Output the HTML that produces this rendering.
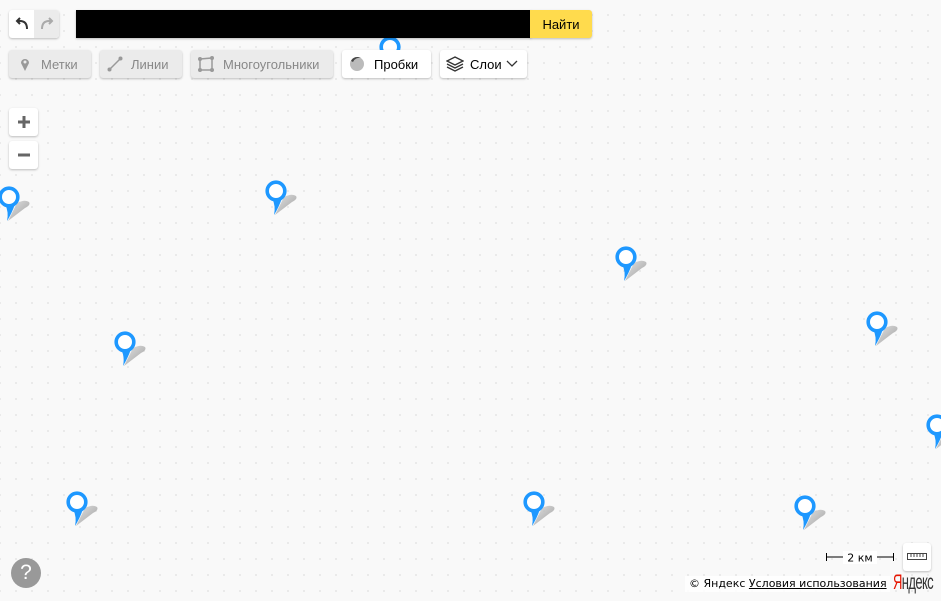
<!DOCTYPE html>
<html><head><meta charset="utf-8"><style>
*{box-sizing:border-box;margin:0;padding:0}
body{width:941px;height:601px;overflow:hidden;position:relative;font-family:"Liberation Sans",sans-serif;background-color:#f9f9f9;background-image:radial-gradient(circle,#e8e8e8 0.9px,transparent 1.2px);background-size:16px 16px;background-position:-8px 7px}
.btn{position:absolute;background:#fff;border-radius:3px;box-shadow:0 1px 2px rgba(0,0,0,.25);font-size:13px;color:#000;display:flex;align-items:center}
.dis{background:#ebebeb;color:#888}
.pin{position:absolute;width:34px;height:40px}
</style></head><body>
<svg width="0" height="0" style="position:absolute"><defs>
<linearGradient id="g" x1="0" y1="0" x2="1" y2="1"><stop offset="0" stop-color="#ddd"/><stop offset="1" stop-color="#888"/></linearGradient>
<symbol id="p" viewBox="0 0 34 40">
<path d="M10 35 L27 22 Q33 19 31 16 Q27 13 19 17 Z" fill="url(#g)" opacity=".8"/>
<path d="M7 18 Q11 26 9 35 Q14 27 17 18 Z" fill="#1e98ff"/>
<circle cx="11" cy="11" r="8.8" fill="#fff" stroke="#1e98ff" stroke-width="3.6"/>
</symbol></defs></svg>

<svg class="pin" style="left:379px;top:36px"><use href="#p"/></svg>
<svg class="pin" style="left:-2px;top:186px"><use href="#p"/></svg>
<svg class="pin" style="left:265px;top:180px"><use href="#p"/></svg>
<svg class="pin" style="left:615px;top:246px"><use href="#p"/></svg>
<svg class="pin" style="left:114px;top:331px"><use href="#p"/></svg>
<svg class="pin" style="left:866px;top:311px"><use href="#p"/></svg>
<svg class="pin" style="left:926px;top:414px"><use href="#p"/></svg>
<svg class="pin" style="left:66px;top:491px"><use href="#p"/></svg>
<svg class="pin" style="left:523px;top:491px"><use href="#p"/></svg>
<svg class="pin" style="left:794px;top:495px"><use href="#p"/></svg>

<div class="btn" style="left:9px;top:10px;width:50px;height:28px;overflow:hidden">
<div style="width:25px;height:28px;display:flex;align-items:center;justify-content:center"><svg width="16" height="14"><path d="M13 12 Q13 4 6 4 L3 4 M6 1 L3 4 L6 7" fill="none" stroke="#333" stroke-width="2"/></svg></div>
<div style="width:25px;height:28px;background:#ebebeb;display:flex;align-items:center;justify-content:center"><svg width="16" height="14"><path d="M3 12 Q3 4 10 4 L13 4 M10 1 L13 4 L10 7" fill="none" stroke="#aaa" stroke-width="2"/></svg></div>
</div>
<div style="position:absolute;left:76px;top:10px;width:455px;height:28px;background:#000;box-shadow:0 1px 2px rgba(0,0,0,.25)"></div>
<div class="btn" style="left:530px;top:10px;width:62px;height:28px;background:#ffdb4d;border-radius:0 3px 3px 0;justify-content:center">Найти</div>

<div class="btn dis" style="left:9px;top:50px;width:82px;height:28px;padding-left:11px"><svg width="10" height="14"><path d="M5 14 L1 6 A4 4 0 1 1 9 6 Z" fill="#999"/><circle cx="5" cy="5" r="1.5" fill="#ebebeb"/></svg><span style="margin-left:11px">Метки</span></div>
<div class="btn dis" style="left:100px;top:50px;width:82px;height:28px;padding-left:7px"><svg width="16" height="16"><path d="M2 14 L14 2" stroke="#999" stroke-width="1.5"/><circle cx="2.5" cy="13.5" r="2" fill="#999"/><circle cx="13.5" cy="2.5" r="2" fill="#999"/></svg><span style="margin-left:8px">Линии</span></div>
<div class="btn dis" style="left:191px;top:50px;width:142px;height:28px;padding-left:7px"><svg width="16" height="16"><path d="M2 3 L14 2 L14 14 L2 14 Z" fill="none" stroke="#999" stroke-width="1.5"/><circle cx="2" cy="3" r="2" fill="#999"/><circle cx="14" cy="2" r="2" fill="#999"/><circle cx="14" cy="14" r="2" fill="#999"/><circle cx="2" cy="14" r="2" fill="#999"/></svg><span style="margin-left:9px">Многоугольники</span></div>
<div class="btn" style="left:342px;top:50px;width:89px;height:28px;padding-left:7px"><svg width="16" height="16"><circle cx="8" cy="8" r="7" fill="#bbb"/><path d="M3 3 A7 7 0 0 1 15 8 A7 7 0 0 0 3 3Z" fill="#444"/><path d="M2 5 A7 7 0 0 1 12 2 A7 7 0 0 0 4 6Z" fill="#444"/></svg><span style="margin-left:9px">Пробки</span></div>
<div class="btn" style="left:440px;top:50px;width:87px;height:28px;padding-left:6px"><svg width="18" height="16"><path d="M9 1 L17 5 L9 9 L1 5Z M1 8 L9 12 L17 8 M1 11 L9 15 L17 11" fill="none" stroke="#333" stroke-width="1.3"/></svg><span style="margin-left:6px">Слои</span><svg width="12" height="8" style="margin-left:4px"><path d="M1 1 L6 6 L11 1" fill="none" stroke="#333" stroke-width="1.3"/></svg></div>

<div class="btn" style="left:9px;top:108px;width:29px;height:28px;justify-content:center"><svg width="14" height="14"><path d="M7 1V13M1 7H13" stroke="#666" stroke-width="3"/></svg></div>
<div class="btn" style="left:9px;top:141px;width:29px;height:28px;justify-content:center"><svg width="14" height="14"><path d="M1 7H13" stroke="#666" stroke-width="3"/></svg></div>

<div style="position:absolute;left:11px;top:558px;width:30px;height:30px;border-radius:50%;background:#999;color:#fff;font-size:21px;text-align:center;line-height:30px">?</div>

<div style="position:absolute;left:825px;top:549px;width:70px;height:16px">
<svg width="70" height="16"><path d="M1.5 4V12M1 8H18M68.5 4V12M52 8H69" stroke="#000" stroke-width="1"/><rect x="18" y="2" width="34" height="13" fill="#fff"/><text x="35" y="12.5" font-size="11" text-anchor="middle" font-family="DejaVu Sans">2 км</text></svg></div>
<div class="btn" style="left:903px;top:543px;width:28px;height:28px;justify-content:center"><svg width="20" height="8"><rect x=".5" y=".5" width="19" height="6" fill="none" stroke="#444"/><path d="M4 1V4M7 1V4M10 1V4M13 1V4M16 1V4" stroke="#444"/></svg></div>

<div style="position:absolute;left:685px;top:576px;height:16px;padding:0 3px 0 4px;background:rgba(255,255,255,.85);font-family:'DejaVu Sans',sans-serif;font-size:11px;line-height:16px;color:#000;white-space:nowrap">© Яндекс <span style="text-decoration:underline">Условия использования</span></div>
<div style="position:absolute;left:893px;top:572px;font-size:21px;line-height:22px;color:#e61400;letter-spacing:-1px;transform:scaleX(.62);transform-origin:left;white-space:nowrap">Я<span style="color:#333">ндекс</span></div>
</body></html>
